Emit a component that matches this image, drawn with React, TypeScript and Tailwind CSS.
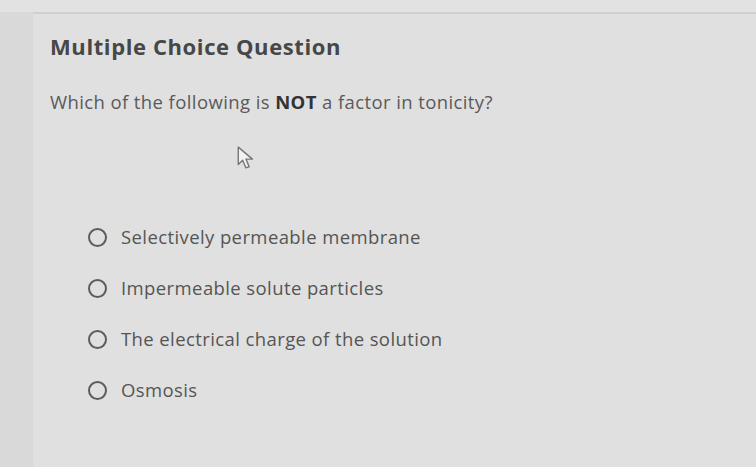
export default function App() {
  const options = [
    "Selectively permeable membrane",
    "Impermeable solute particles",
    "The electrical charge of the solution",
    "Osmosis",
  ];
  return (
    <div className="flex h-[467px] w-[756px] flex-col overflow-hidden bg-[#dedede] font-['Open_Sans',sans-serif]">
      <div className="h-[12px] bg-[#e2e2e2]" />
      <div className="flex flex-1">
        <div className="w-[33px] bg-[#d9d9d9]" />
        <div className="relative flex-1 border-t-2 border-[#cfcfcf] bg-[#e0e0e0] pl-[17px] pt-[18px]">
          <h1 className="text-[22px] font-bold leading-[28px] tracking-[0.6px] text-[#474747]">Multiple Choice Question</h1>
          <p className="mt-[30px] text-[18.5px] leading-[24px] tracking-[0.4px] text-[#5a5a5a]">
            Which of the following is <span className="font-bold text-[#333]">NOT</span> a factor in tonicity?
          </p>
          <svg className="absolute left-[203px] top-[132px]" width="22" height="24" viewBox="0 0 20 22">
            <path d="M2 1 L2 17 L6 13 L9 20 L12 19 L9 12 L15 12 Z" fill="#f2f2f2" stroke="#777" strokeWidth="1.3" strokeLinejoin="round" />
          </svg>
          <div className="mt-[111px] flex flex-col gap-[27px] pl-[38px]">
            {options.map((o) => (
              <label key={o} className="flex h-[24px] items-center gap-[14px]">
                <span className="h-[19px] w-[19px] shrink-0 rounded-full border-[2.5px] border-[#5c5c5c]" />
                <span className="text-[18.5px] tracking-[0.4px] text-[#555]">{o}</span>
              </label>
            ))}
          </div>
        </div>
      </div>
    </div>
  );
}
